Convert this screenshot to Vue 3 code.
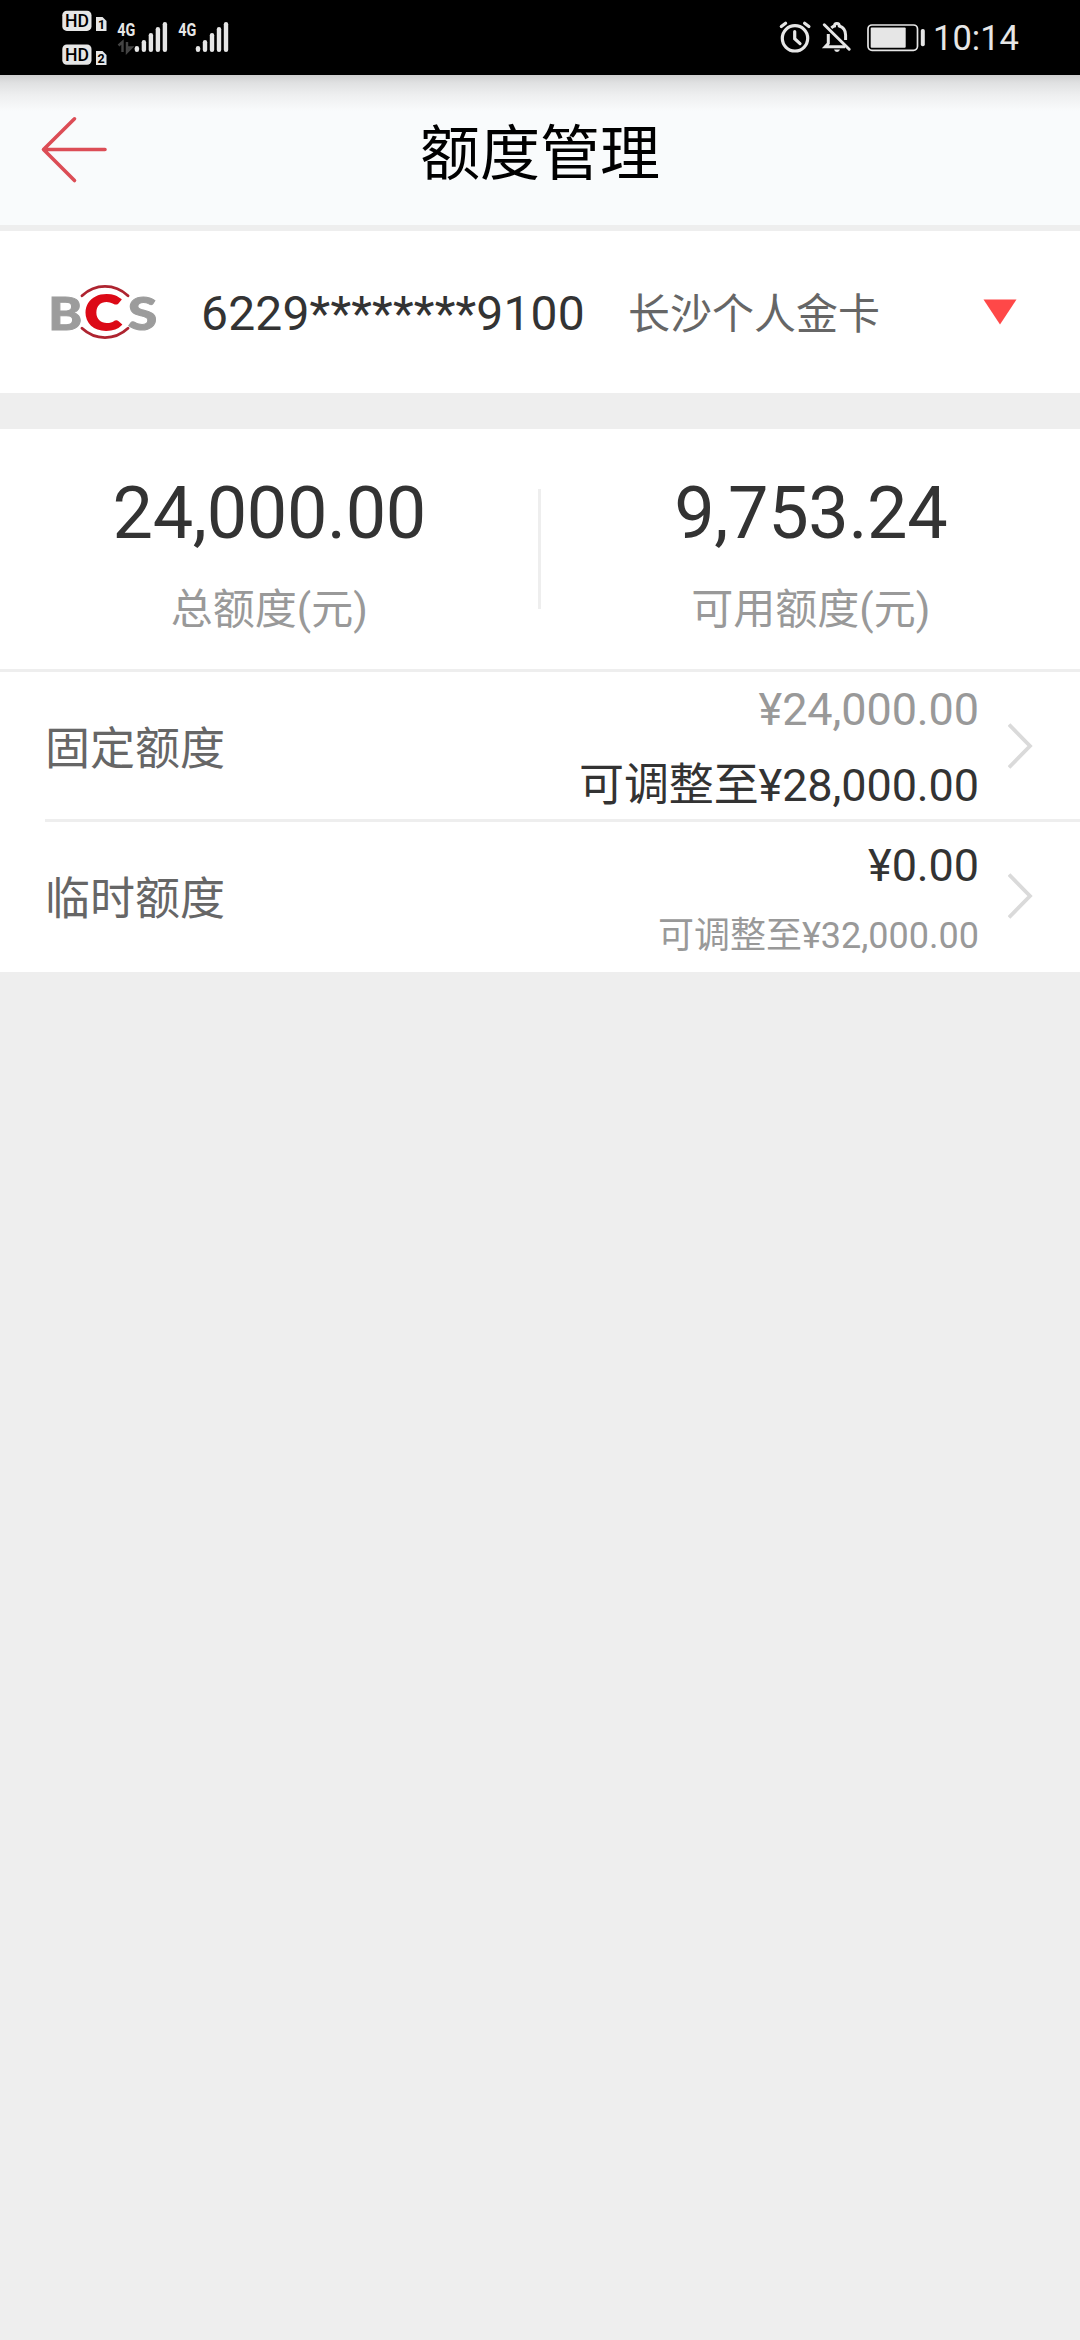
<script setup>
const totals = [
  { value: '24,000.00', label: '总额度(元)' },
  { value: '9,753.24', label: '可用额度(元)' },
]
const limits = [
  {
    name: '固定额度',
    current: { text: '¥24,000.00', tone: 'muted' },
    adjust: { text: '可调整至¥28,000.00', tone: 'strong' },
  },
  {
    name: '临时额度',
    current: { text: '¥0.00', tone: 'strong' },
    adjust: { text: '可调整至¥32,000.00', tone: 'muted small' },
  },
]
const bars = [
  { x: 0, h: 6 },
  { x: 7, h: 12 },
  { x: 14, h: 19 },
  { x: 21, h: 25 },
  { x: 28, h: 30 },
]
</script>

<template>
  <div class="screen">
    <div class="status">
      <svg class="status-left" width="180" height="75" viewBox="60 0 180 75">
        <g fill="#e6e6e6">
          <rect x="62.3" y="10.7" width="29.2" height="20.2" rx="4.5" />
          <rect x="62.3" y="44.5" width="29.2" height="20.2" rx="4.5" />
          <path d="M96 17h6.5l4 4v10H96zM96 51h6.5l4 4v10H96z" />
        </g>
        <g class="glyph dark">
          <text x="65" y="27.2" font-size="18" textLength="24" lengthAdjust="spacingAndGlyphs">HD</text>
          <text x="65" y="61" font-size="18" textLength="24" lengthAdjust="spacingAndGlyphs">HD</text>
          <text x="98" y="28.8" font-size="12.5" font-weight="700">1</text>
          <text x="97.6" y="63" font-size="12.5" font-weight="700">2</text>
        </g>
        <g class="glyph light">
          <text x="117.3" y="35.5" font-size="19" textLength="18" lengthAdjust="spacingAndGlyphs">4G</text>
          <text x="178.3" y="35.5" font-size="19" textLength="18" lengthAdjust="spacingAndGlyphs">4G</text>
        </g>
        <path d="M118.5 45.5L122.5 42V52M127 42V52L131.5 47.5H127" fill="none" stroke="#444" stroke-width="2.4" />
        <g fill="#e6e6e6">
          <rect v-for="b in bars" :key="'a' + b.x" :x="134.7 + b.x" :y="52 - b.h" width="4.4" :height="b.h" rx="2.2" />
          <rect v-for="b in bars" :key="'b' + b.x" :x="195.8 + b.x" :y="52 - b.h" width="4.4" :height="b.h" rx="2.2" />
        </g>
      </svg>
      <div class="status-right">
        <svg width="150" height="75" viewBox="778 0 150 75" fill="none" stroke="#e6e6e6">
          <circle cx="795" cy="38.3" r="12.7" stroke-width="3.2" />
          <path d="M794.7 31.5V38.8L800 43.6" stroke-width="3.2" stroke-linecap="round" />
          <path d="M781.3 26.6L785.6 23.3M804.6 23.3L808.9 26.6" stroke-width="3.2" stroke-linecap="round" />
          <path d="M828.3 34V43.5L825.3 46.7H845M831.3 27.8Q833 26.3 834.5 26C834.5 22.5 839.3 22.5 839.3 26C844 27.5 845.6 31 845.6 35V40" stroke-width="3" />
          <path d="M824.3 24.8L849.2 49.2" stroke-width="3" stroke-linecap="round" />
          <path d="M834 49.6H840Q839.5 52 837 52Q834.5 52 834 49.6Z" fill="#e6e6e6" stroke="none" />
          <rect x="868" y="25" width="49.5" height="25.3" rx="4" stroke-width="1.7" />
          <rect x="870.7" y="27.5" width="35" height="20.2" rx="1" fill="#e6e6e6" stroke="none" />
          <rect x="920.8" y="29" width="4" height="17.2" rx="1.8" fill="#e6e6e6" stroke="none" />
        </svg>
        <span class="clock">10:14</span>
      </div>
    </div>

    <header class="header">
      <svg class="back" width="68" height="68" viewBox="0 0 68 68" fill="none" stroke="#dc4d56" stroke-width="3.6" stroke-linecap="round" stroke-linejoin="round">
        <path d="M34.5 2.8L3.5 33.5L34.5 64.5M3.5 33.5H65" />
      </svg>
      <h1>额度管理</h1>
    </header>

    <section class="card">
      <svg class="logo" width="120" height="80" viewBox="42 272 120 80">
        <g font-family="Lato, sans-serif" font-weight="900">
          <text x="48.2" y="329.7" font-size="45.5" textLength="34" lengthAdjust="spacingAndGlyphs" fill="#9c9c9c" stroke="#9c9c9c">B</text>
          <text x="84.8" y="329.5" font-size="47" textLength="36.5" lengthAdjust="spacingAndGlyphs" fill="#dc0a17" stroke="#dc0a17" stroke-width="2">C</text>
          <text x="127.8" y="329.5" font-size="46" textLength="29.5" lengthAdjust="spacingAndGlyphs" fill="#9c9c9c" stroke="#9c9c9c">S</text>
        </g>
        <path d="M82 295.7Q92 286.4 105 286.4T128 295.7M82 328.3Q92 337.6 105 337.6T128 328.3" fill="none" stroke="#ae2430" stroke-width="2.9" stroke-linecap="round" />
      </svg>
      <span class="number">6229********9100</span>
      <span class="kind">长沙个人金卡</span>
      <svg class="caret" width="34" height="26" viewBox="0 0 34 26"><path d="M0.5 0.5H33.5L17 25.5Z" fill="#ff4848" /></svg>
    </section>

    <section class="totals">
      <div v-for="t in totals" :key="t.label" class="total">
        <div class="value">{{ t.value }}</div>
        <div class="label">{{ t.label }}</div>
      </div>
    </section>

    <section class="limits">
      <div v-for="l in limits" :key="l.name" class="limit">
        <span class="name">{{ l.name }}</span>
        <div class="amounts">
          <div class="line" :class="l.current.tone">{{ l.current.text }}</div>
          <div class="line" :class="l.adjust.tone">{{ l.adjust.text }}</div>
        </div>
        <svg class="chevron" width="26" height="46" viewBox="0 0 26 46"><path d="M1 1.5L22 23L1 44.5" fill="none" stroke="#dadada" stroke-width="3.8" /></svg>
      </div>
    </section>
  </div>
</template>

<style>
body {
  background: #eee;
}
</style>

<style scoped>
.screen {
  width: 1080px;
  min-height: 2340px;
  background: #eee;
  color: #333;
  font-family: Roboto, "Noto Sans CJK SC", sans-serif;
}
.status {
  display: flex;
  justify-content: space-between;
  height: 75px;
  padding: 0 60px;
  background: #000;
}
.status-right {
  display: flex;
}
.clock {
  width: 87px;
  margin-left: 5px;
  color: #e6e6e6;
  font-size: 34.5px;
  line-height: 76px;
}
.glyph {
  font-family: Roboto, sans-serif;
  font-weight: 700;
}
.dark {
  fill: #000;
  font-weight: 500;
}
.light {
  fill: #e6e6e6;
}
.header {
  display: grid;
  grid-template-columns: 160px 1fr 160px;
  align-items: center;
  height: 150px;
  border-bottom: 6px solid #eee;
  background: linear-gradient(#cfcfd0, #e0e1e2 8px, #eeeff0 20px, #f9fbfc 36px);
}
.back {
  margin-left: 40px;
}
h1 {
  margin: 0;
  padding-top: 9px;
  color: #000;
  font-size: 60px;
  font-weight: 400;
  line-height: 141px;
  text-align: center;
}
.card {
  display: flex;
  align-items: center;
  height: 162px;
  padding: 0 63px 0 42px;
  background: #fff;
}
.logo {
  overflow: visible;
}
.number {
  margin-left: 39px;
  padding-top: 2px;
  font-size: 48px;
  letter-spacing: 0.17px;
}
.kind {
  margin-left: 43px;
  padding-bottom: 4px;
  color: #666;
  font-size: 42px;
}
.caret {
  margin-left: auto;
}
.totals {
  display: grid;
  grid-template-columns: 1fr 1fr;
  column-gap: 3px;
  height: 240px;
  margin-top: 36px;
  border-bottom: 3px solid #eee;
  background: linear-gradient(#eee, #eee) 538px 60px / 3px 120px no-repeat #fff;
}
.total {
  padding-top: 42px;
  text-align: center;
}
.value {
  font-size: 72px;
  letter-spacing: -0.35px;
  line-height: 85px;
}
.label {
  margin-top: 24px;
  color: #999;
  font-size: 42px;
  line-height: 60px;
}
.limits {
  background: #fff;
}
.limit {
  display: flex;
  align-items: center;
  height: 150px;
  padding: 0 46px 0 45px;
}
.limit:first-child {
  background: linear-gradient(#eee, #eee) 45px 100% / 1035px 3px no-repeat;
}
.name {
  padding-bottom: 4px;
  color: #666;
  font-size: 45px;
}
.amounts {
  margin-left: auto;
  padding-top: 2px;
  text-align: right;
}
.line {
  font-size: 45px;
  letter-spacing: -0.1px;
  line-height: 76px;
}
.muted {
  color: #999;
}
.small {
  font-size: 36px;
  letter-spacing: 0;
  line-height: 64px;
}
.chevron {
  margin: 0 0 2px 29px;
}
</style>
